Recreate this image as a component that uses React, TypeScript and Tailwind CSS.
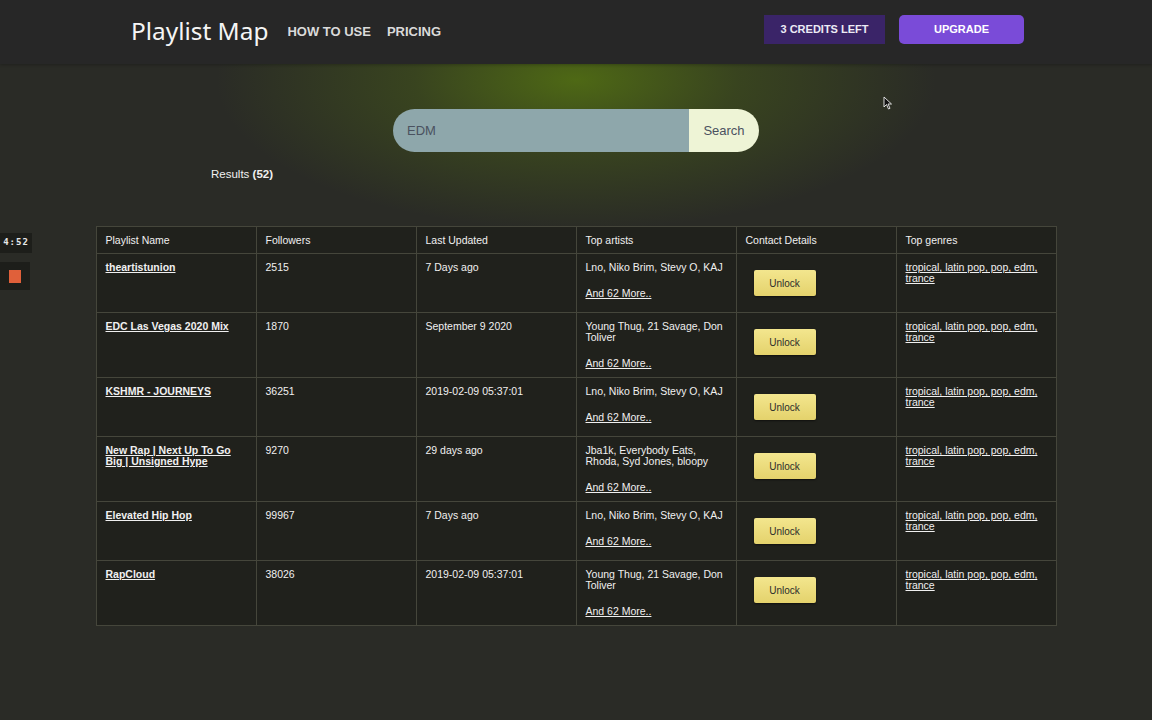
import React from "react";

const rows = [
  { name: "theartistunion", followers: "2515", updated: "7 Days ago", artists: "Lno, Niko Brim, Stevy O, KAJ" },
  { name: "EDC Las Vegas 2020 Mix", followers: "1870", updated: "September 9 2020", artists: "Young Thug, 21 Savage, Don Toliver" },
  { name: "KSHMR - JOURNEYS", followers: "36251", updated: "2019-02-09 05:37:01", artists: "Lno, Niko Brim, Stevy O, KAJ" },
  { name: "New Rap | Next Up To Go Big | Unsigned Hype", followers: "9270", updated: "29 days ago", artists: "Jba1k, Everybody Eats, Rhoda, Syd Jones, bloopy" },
  { name: "Elevated Hip Hop", followers: "99967", updated: "7 Days ago", artists: "Lno, Niko Brim, Stevy O, KAJ" },
  { name: "RapCloud", followers: "38026", updated: "2019-02-09 05:37:01", artists: "Young Thug, 21 Savage, Don Toliver" },
];

const headers = ["Playlist Name", "Followers", "Last Updated", "Top artists", "Contact Details", "Top genres"];

export default function App() {
  return (
    <div
      className="relative w-[1152px] h-[720px] overflow-hidden bg-[#2a2b26] text-[#f0f0f0]"
      style={{ fontFamily: '"Liberation Sans", Arial, sans-serif' }}
    >
      <div className="absolute inset-0 bg-[radial-gradient(ellipse_360px_150px_at_576px_80px,rgba(90,125,15,0.75),rgba(90,125,15,0.3)_45%,rgba(90,125,15,0)_100%)] pointer-events-none" />
      <div className="relative">
        <header className="relative h-[64px] bg-[#272727] shadow-[0_1px_3px_rgba(0,0,0,0.25)] pl-[131px] pr-[128px]">
          <div className="flex items-center h-[63px]">
            <div
              className="text-[24.4px] leading-none text-[#f5f5f5] font-normal mr-[19px]"
              style={{ fontFamily: '"Noto Sans", sans-serif' }}
            >
              Playlist Map
            </div>
            <nav className="flex items-center gap-[16px] text-[13px] font-bold text-[#dadada] mt-[1px]">
              <span>HOW TO USE</span>
              <span>PRICING</span>
            </nav>
          </div>
          <div className="absolute right-[128px] top-[15px] flex items-center gap-[14px]">
            <div className="w-[121px] h-[29px] flex items-center justify-center bg-[#3a2468] text-[11px] font-bold text-[#ecebf5]">
              3 CREDITS LEFT
            </div>
            <div className="w-[125px] h-[29px] flex items-center justify-center bg-[#7a4bd8] rounded-[5px] text-[11px] font-bold text-white">
              UPGRADE
            </div>
          </div>
        </header>

        <div className="flex justify-center mt-[45px]">
          <div className="flex w-[366px] h-[43px] rounded-full overflow-hidden">
            <div className="flex-1 bg-[#8ea7ab] flex items-center pl-[14px] text-[13px] text-[#4a5260]">EDM</div>
            <div className="w-[70px] bg-[#eef4d6] flex items-center justify-center text-[13px] text-[#4b5160]">Search</div>
          </div>
        </div>

        <div className="pl-[211px] mt-[15px] text-[11.5px] leading-[14px] text-[#f0f0f0]">
          Results <span className="font-bold">(52)</span>
        </div>

        <div className="flex justify-center mt-[45px]">
          <table className="w-[960px] table-fixed border-collapse text-[10.5px] leading-[11px] bg-[#20211c]">
            <thead>
              <tr>
                {headers.map((h) => (
                  <th key={h} className="w-[160px] border border-[#45463b] px-[9px] pt-[8px] pb-[7px] text-left font-normal align-top">
                    {h}
                  </th>
                ))}
              </tr>
            </thead>
            <tbody>
              {rows.map((r) => (
                <tr key={r.name}>
                  <td className="border border-[#45463b] px-[9px] py-[8px] align-top">
                    <span className="font-bold underline">{r.name}</span>
                  </td>
                  <td className="border border-[#45463b] px-[9px] py-[8px] align-top">{r.followers}</td>
                  <td className="border border-[#45463b] px-[9px] py-[8px] align-top">{r.updated}</td>
                  <td className="border border-[#45463b] px-[9px] py-[8px] align-top">
                    <div>{r.artists}</div>
                    <div className="mt-[15px] underline">And 62 More..</div>
                  </td>
                  <td className="border border-[#45463b] px-[9px] py-[8px] align-top">
                    <div className="ml-[8px] my-[8px] w-[62px] h-[26px] flex items-center justify-center bg-[linear-gradient(#f3e68e,#e4d26c)] rounded-[2px] shadow-[0_1px_2px_rgba(0,0,0,0.5)] text-[10px] text-[#2c2c2c]">
                      Unlock
                    </div>
                  </td>
                  <td className="border border-[#45463b] px-[9px] py-[8px] align-top">
                    <span className="underline">tropical, latin pop, pop, edm, trance</span>
                  </td>
                </tr>
              ))}
            </tbody>
          </table>
        </div>
      </div>

      <div className="absolute left-0 top-[233px] w-[32px] h-[20px] bg-[#1d1e1a] flex items-center justify-center text-[9px] font-bold text-[#e8e8e8] tracking-[1px]" style={{ fontFamily: '"DejaVu Sans Mono", monospace' }}>
        4:52
      </div>
      <div className="absolute left-0 top-[262px] w-[30px] h-[28px] bg-[#1d1e1a] flex items-center justify-center">
        <div className="w-[12px] h-[13px] bg-[#e0603a]" />
      </div>

      <svg className="absolute left-[883px] top-[96px]" width="10" height="14" viewBox="0 0 10 14">
        <path d="M1 1 L1 11 L3.5 8.5 L5.5 13 L7 12.3 L5 8 L8.5 8 Z" fill="#111" stroke="#eee" strokeWidth="0.9" />
      </svg>
    </div>
  );
}
